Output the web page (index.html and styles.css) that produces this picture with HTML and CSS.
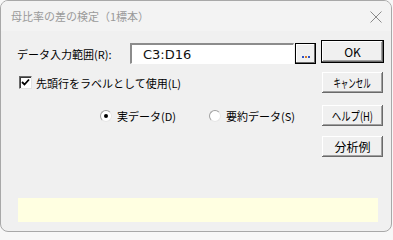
FILE: index.html
```html
<!DOCTYPE html>
<html lang="ja">
<head>
<meta charset="utf-8">
<link rel="stylesheet" href="styles.css">
</head>
<body>
<div class="window">
  <div class="titlebar">
    <span class="title">母比率の差の検定（1標本）</span>
    <svg class="close" width="12" height="12" viewBox="0 0 12 12"><path d="M0.5 0.5 L11.5 11.5 M11.5 0.5 L0.5 11.5" stroke="#8a8a8a" stroke-width="1" fill="none"/></svg>
  </div>
  <div class="client">
    <div class="main">
      <div class="left">
        <div class="row-range">
          <span class="label">データ入力範囲(R):</span>
          <div class="input">C3:D16</div>
          <div class="dots"><span class="d1"></span><span class="d2"></span><span class="d3"></span></div>
        </div>
        <div class="row-check">
          <span class="checkbox"><svg width="9" height="9" viewBox="0 0 9 9"><path d="M1 4 L3.5 6.5 L8 1.5" stroke="#000" stroke-width="1.8" fill="none"/></svg></span>
          <span class="check-label">先頭行をラベルとして使用(L)</span>
        </div>
        <div class="row-radio">
          <span class="radio on"><span class="dot"></span></span>
          <span class="radio-label">実データ(D)</span>
          <span class="radio second"></span>
          <span class="radio-label">要約データ(S)</span>
        </div>
      </div>
      <div class="buttons">
        <div class="btn default">OK</div>
        <div class="btn"><span class="narrow cancel">キャンセル</span></div>
        <div class="btn"><span class="narrow help">ヘルプ(H)</span></div>
        <div class="btn">分析例</div>
      </div>
    </div>
    <div class="status"></div>
  </div>
</div>
</body>
</html>
```
FILE: styles.css
```css
html, body {
  margin: 0;
  padding: 0;
  background: #f7f7f7;
}
body {
  width: 393px;
  height: 232px;
  overflow: hidden;
  font-family: "Noto Sans CJK JP", "Noto Sans", sans-serif;
  font-size: 11px;
  color: #000;
}
.window {
  width: 390px;
  height: 230px;
  border: 1px solid #a8a8a8;
  border-radius: 8px;
  background: #f0f0f0;
  overflow: hidden;
}
.titlebar {
  height: 30px;
  background: #f3f3f3;
  display: flex;
  align-items: center;
  padding-left: 10px;
  padding-right: 8px;
}
.title {
  color: #9a9a9a;
  font-size: 11px;
  flex: 1;
}
.close {
  margin-top: 1px;
  margin-right: 1px;
}
.client {
  padding-left: 16px;
}
.main {
  display: flex;
}
.left {
  flex: 1;
}
.row-range {
  margin-top: 12px;
  height: 21px;
  display: flex;
  align-items: center;
}
.label {
  width: 113px;
  font-size: 11px;
}
.input {
  width: 150px;
  height: 18px;
  background: #fff;
  border-top: 2px solid #8c8c8c;
  border-left: 2px solid #8c8c8c;
  border-bottom: 1px solid #fff;
  border-right: 1px solid #fff;
  padding-left: 11px;
  font-family: "DejaVu Sans", sans-serif;
  font-size: 13px;
  line-height: 19px;
  color: #111;
}
.dots {
  margin-left: 1px;
  width: 19px;
  height: 19px;
  border: 1px solid #000;
  background: #f0f0f0;
  box-shadow: inset -1px -1px 0 #6a6a6a, inset 1px 1px 0 #fff;
  display: flex;
  align-items: flex-end;
  justify-content: center;
  gap: 1px;
}
.dots span {
  width: 2px;
  height: 2px;
  margin-bottom: 5px;
}
.d1 { background: #2d54c8; }
.d2 { background: #d07a2a; }
.d3 { background: #2d54c8; }
.row-check {
  margin-top: 11px;
  height: 15px;
  display: flex;
  align-items: center;
}
.checkbox {
  width: 11px;
  height: 11px;
  background: #fff;
  border-top: 1px solid #6a6a6a;
  border-left: 1px solid #6a6a6a;
  border-right: 1px solid #e3e3e3;
  border-bottom: 1px solid #e3e3e3;
  box-shadow: inset 1px 1px 0 #3a3a3a;
  display: flex;
  align-items: center;
  justify-content: center;
  margin-left: 2px;
}
.check-label {
  margin-left: 4px;
  font-size: 11px;
}
.row-radio {
  margin-top: 18px;
  height: 16px;
  display: flex;
  align-items: center;
}
.radio {
  width: 10px;
  height: 10px;
  border-radius: 50%;
  background: #fff;
  border: 1px solid #a0a0a0;
  border-right-color: #e6e6e6;
  border-bottom-color: #e6e6e6;
  display: flex;
  align-items: center;
  justify-content: center;
  margin-left: 83px;
}
.radio .dot {
  width: 4px;
  height: 4px;
  border-radius: 50%;
  background: #000;
}
.radio.second {
  margin-left: 33px;
}
.radio-label {
  margin-left: 5px;
  font-size: 11px;
}
.buttons {
  width: 63px;
  flex: none;
  margin-right: 7px;
  margin-top: 9px;
  display: flex;
  flex-direction: column;
  gap: 8px;
}
.btn {
  height: 23px;
  box-sizing: border-box;
  border: 1px solid transparent;
  background: #f0f0f0;
  box-shadow: inset -1px -1px 0 #6a6a6a, inset 1px 1px 0 #fff, inset -2px -2px 0 #a0a0a0;
  display: flex;
  align-items: center;
  justify-content: center;
  font-size: 12px;
  white-space: nowrap;
}
.narrow {
  display: inline-block;
}
.cancel {
  transform: scaleX(0.62);
}
.help {
  transform: scaleX(0.78);
}
.btn.default {
  border-color: #000;
}
.btn:nth-child(3) {
  margin-top: 2px;
}
.status {
  margin-top: 40px;
  width: 360px;
  height: 24px;
  margin-left: 1px;
  background: #ffffe1;
}
```
